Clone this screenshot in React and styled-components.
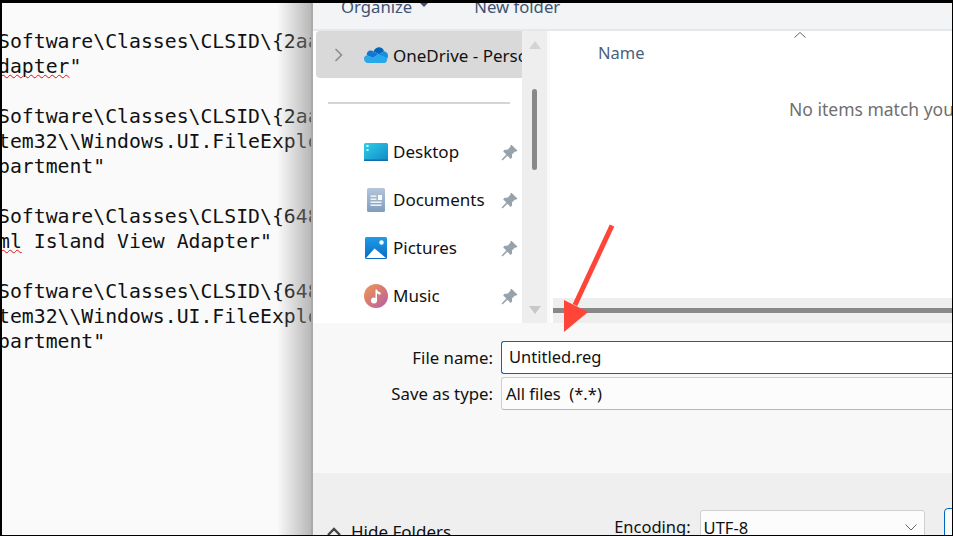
import React from "react";
import styled, { createGlobalStyle } from "styled-components";

const uiFont = `"Noto Sans", "Open Sans", sans-serif`;

const GlobalStyle = createGlobalStyle`
	html, body {
		margin: 0;
		padding: 0;
		background: #000;
	}
	* {
		box-sizing: border-box;
	}
`;

function CloudIcon() {
	return (
		<CloudSvg width="24" height="16" viewBox="0 0 24 16">
			<path d="M9.6 4.4C10.6 1.6 13 .3 15 .3c2.400 0 4.300 1.400 5 3.900l-5 3-5.400-2.800z" fill="#0364b8" />
			<path d="M9.600 4.400C8.200 3.400 6.800 3.200 5.600 3.600 3.500 4.300 2.600 6 2.800 8.200L9 11l5.600-3.800-5-2.800z" fill="#0f78d4" />
			<path d="M20 4.200c2.200.2 4 2 4 4.700 0 .9-.3 1.600-.6 2.200L17 12l-2.600-4.800L20 4.200z" fill="#1490df" />
			<path d="M2.800 8.200C1 8.500 0 10 0 11.700 0 14 1.800 16 4 16h16.500c1.300 0 2.400-.9 2.900-4.900L14.600 7.200 9 11 2.800 8.200z" fill="#28a8ea" />
		</CloudSvg>
	);
}

function DesktopIcon() {
	return (
		<svg width="24" height="18" viewBox="0 0 24 18">
			<defs>
				<linearGradient id="desk" x1="0" y1="0" x2="1" y2="1">
					<stop offset="0" stopColor="#2bd0e6" />
					<stop offset="1" stopColor="#1488c8" />
				</linearGradient>
			</defs>
			<rect width="24" height="18" rx="1.500" fill="url(#desk)" />
			<rect y="16.500" width="24" height="1.500" fill="#0f6db0" />
			<rect x="2.500" y="2" width="2" height="2" fill="#fff" />
			<rect x="2.500" y="6" width="2" height="2" fill="#d8f4fa" />
		</svg>
	);
}

function DocumentsIcon() {
	return (
		<svg width="18" height="24" viewBox="0 0 18 24">
			<defs>
				<linearGradient id="docs" x1="0" y1="0" x2="0" y2="1">
					<stop offset="0" stopColor="#b4c6da" />
					<stop offset="1" stopColor="#7f9dbd" />
				</linearGradient>
			</defs>
			<rect width="18" height="24" rx="1.500" fill="url(#docs)" />
			<rect x="3.500" y="7.500" width="6" height="1.300" fill="#fff" />
			<rect x="3.500" y="10.500" width="6" height="1.300" fill="#fff" />
			<rect x="3.500" y="13.500" width="11" height="1.300" fill="#fff" />
			<rect x="3.500" y="16.500" width="11" height="1.300" fill="#fff" />
			<rect x="11" y="7" width="4" height="5" fill="#fff" />
		</svg>
	);
}

function PicturesIcon() {
	return (
		<svg width="22" height="22" viewBox="0 0 22 22">
			<defs>
				<linearGradient id="pics" x1="0" y1="0" x2="0" y2="1">
					<stop offset="0" stopColor="#1f9be8" />
					<stop offset="1" stopColor="#0a6cc4" />
				</linearGradient>
			</defs>
			<rect width="22" height="22" rx="1.500" fill="url(#pics)" />
			<circle cx="16.500" cy="5.500" r="2.200" fill="#fff" />
			<path d="M1 21L9.500 11.500 21 21z" fill="#fff" />
		</svg>
	);
}

function MusicIcon() {
	return (
		<svg width="24" height="24" viewBox="0 0 24 24">
			<defs>
				<linearGradient id="music" x1="0" y1="0" x2="1" y2="1">
					<stop offset="0" stopColor="#f09a4c" />
					<stop offset="1" stopColor="#b85aa8" />
				</linearGradient>
			</defs>
			<circle cx="12" cy="12" r="12" fill="url(#music)" />
			<circle cx="10" cy="16.500" r="3" fill="#fff" />
			<path d="M11.500 16.500V5.500h1.500c.4 2 2 2.500 3.500 3v2.200c-1.500-.2-2.700-.7-3.500-1.500v7.300z" fill="#fff" />
		</svg>
	);
}

function PinIcon() {
	return (
		<svg width="17" height="17" viewBox="0 0 16 16">
			<path d="M9.800.6l5.600 5.600-1.300 1.200-1-.3-2.800 2.800.2 2.700-1.500 1.400-3-3L1.500 15.500 0.500 14.500 5 9.800 2 6.800l1.400-1.500 2.700.2 2.800-2.800-.3-1 1.200-1.100z" fill="#98a2aa" />
		</svg>
	);
}

const navItems = [
	{ label: "Desktop", icon: <DesktopIcon /> },
	{ label: "Documents", icon: <DocumentsIcon /> },
	{ label: "Pictures", icon: <PicturesIcon /> },
	{ label: "Music", icon: <MusicIcon /> },
];

function App() {
	return (
		<>
			<GlobalStyle />
			<Screen>
				<Editor>
					<Line>Software\Classes\CLSID\{"{"}2aa</Line>
					<Line><Misspelt>dapter</Misspelt>"</Line>
					<Line />
					<Line>Software\Classes\CLSID\{"{"}2aa</Line>
					<Line>tem32\\Windows.UI.FileExplo</Line>
					<Line>partment"</Line>
					<Line />
					<Line>Software\Classes\CLSID\{"{"}648</Line>
					<Line><Misspelt>ml</Misspelt> Island View Adapter"</Line>
					<Line />
					<Line>Software\Classes\CLSID\{"{"}648</Line>
					<Line>tem32\\Windows.UI.FileExplo</Line>
					<Line>partment"</Line>
				</Editor>
				<Dialog>
					<Toolbar>
						<ToolbarButton>
							Organize<ToolbarCaret />
						</ToolbarButton>
						<ToolbarButton>New folder</ToolbarButton>
					</Toolbar>
					<Browser>
						<NavPane>
							<SelectedRow>
								<Chevron viewBox="0 0 10 14" width="10" height="14">
									<path d="M1.500 1l6 6-6 6" fill="none" stroke="#8a8a8a" strokeWidth="1.500" />
								</Chevron>
								<CloudIcon />
								<NavLabel $selected>OneDrive - Personal</NavLabel>
							</SelectedRow>
							<NavDivider />
							{navItems.map((item) => (
								<NavRow key={item.label}>
									<NavIcon>{item.icon}</NavIcon>
									<NavLabel>{item.label}</NavLabel>
									<NavPin>
										<PinIcon />
									</NavPin>
								</NavRow>
							))}
						</NavPane>
						<NavScrollbar>
							<ScrollArrow viewBox="0 0 12 8" width="12" height="8">
								<path d="M6 0l6 8H0z" fill="#d4d4d4" />
							</ScrollArrow>
							<ScrollThumb />
							<ScrollArrow viewBox="0 0 12 8" width="12" height="8">
								<path d="M0 0h12L6 8z" fill="#c8c8c8" />
							</ScrollArrow>
						</NavScrollbar>
						<Gutter />
						<Files>
							<SortCaret viewBox="0 0 12 6" width="12" height="6">
								<path d="M.5 5.500L6 .5l5.500 5" fill="none" stroke="#666" />
							</SortCaret>
							<ColumnName>Name</ColumnName>
							<EmptyNote>No items match your search.</EmptyNote>
							<HScrollbar>
								<HThumb />
							</HScrollbar>
						</Files>
					</Browser>
					<Form>
						<FormRow>
							<FormLabel>File name:</FormLabel>
							<NameInput>Untitled.reg</NameInput>
						</FormRow>
						<FormRow>
							<FormLabel>Save as type:</FormLabel>
							<TypeSelect>All files&nbsp;&nbsp;(*.*)</TypeSelect>
						</FormRow>
					</Form>
					<Footer>
						<HideFolders>
							<svg viewBox="0 0 14 9" width="14" height="9">
								<path d="M1 8l6-6 6 6" fill="none" stroke="#444" strokeWidth="2.400" />
							</svg>
							Hide Folders
						</HideFolders>
						<EncodingLabel>Encoding:</EncodingLabel>
						<EncodingSelect>
							UTF-8
							<svg viewBox="0 0 12 7" width="12" height="7">
								<path d="M.5.5L6 6l5.500-5.500" fill="none" stroke="#666" />
							</svg>
						</EncodingSelect>
						<SaveButton />
					</Footer>
				</Dialog>
				<Arrow viewBox="0 0 953 536" width="953" height="536">
					<path d="M612 225.500L575 305" stroke="#ff4438" strokeWidth="5" fill="none" />
					<path d="M564 300L588 312 564 332z" fill="#ff4438" />
				</Arrow>
			</Screen>
		</>
	);
}

const CloudSvg = styled.svg`
	flex-shrink: 0;
`;
const Screen = styled.div`
	position: relative;
	width: 953px;
	height: 536px;
	overflow: hidden;
	display: flex;
	padding: 3px 1px 1px 2px;
	background: #000;
`;
const Editor = styled.div`
	position: relative;
	width: 309px;
	flex-shrink: 0;
	overflow: hidden;
	padding-top: 26px;
	background: #fafafa;
	font-family: "DejaVu Sans Mono", monospace;
	font-size: 19.8px;
	line-height: 25px;
	color: #111;
	&::after {
		content: "";
		position: absolute;
		top: 0;
		right: 0;
		bottom: 0;
		width: 34px;
		background: linear-gradient(to right, rgba(140, 140, 140, 0), rgba(140, 140, 140, 0.6));
	}
`;
const Line = styled.div`
	height: 25px;
	margin-left: -4px;
	white-space: pre;
`;
const Misspelt = styled.span`
	text-decoration: underline wavy #e01010 1px;
`;
const Dialog = styled.div`
	flex: 1;
	min-width: 0;
	display: flex;
	flex-direction: column;
	border-left: 2px solid #aaa;
	overflow: hidden;
	background: #f8f8f8;
	font-family: ${uiFont};
	font-size: 16.500px;
	color: #111;
`;
const Toolbar = styled.div`
	height: 28px;
	flex-shrink: 0;
	display: flex;
	gap: 46px;
	padding-left: 28px;
	background: #f3f4f6;
	border-bottom: 2px solid #e5e7ea;
	overflow: hidden;
`;
const ToolbarButton = styled.div`
	margin-top: -10px;
	display: flex;
	align-items: center;
	gap: 8px;
	height: 26px;
	color: #3e5374;
	font-size: 16.700px;
`;
const ToolbarCaret = styled.span`
	width: 0;
	height: 0;
	border-left: 4px solid transparent;
	border-right: 4px solid transparent;
	border-top: 4px solid #3e5374;
	margin-bottom: 3px;
`;
const Browser = styled.div`
	height: 292px;
	flex-shrink: 0;
	display: flex;
	background: #fff;
`;
const NavPane = styled.div`
	width: 209px;
	flex-shrink: 0;
	overflow: hidden;
	background: #fff;
	font-size: 17px;
`;
const SelectedRow = styled.div`
	height: 47px;
	margin-left: 3px;
	display: flex;
	align-items: center;
	background: #d9d9d9;
	border-radius: 4px 0 0 4px;
	white-space: nowrap;
	overflow: hidden;
	padding-left: 18px;
`;
const Chevron = styled.svg`
	margin-right: 20px;
	flex-shrink: 0;
`;
const NavDivider = styled.div`
	height: 2px;
	margin: 24px 12px 24px 15px;
	background: #d5d5d5;
`;
const NavRow = styled.div`
	height: 48px;
	display: flex;
	align-items: center;
	position: relative;
`;
const NavIcon = styled.div`
	width: 24px;
	margin-left: 51px;
	display: flex;
	justify-content: center;
`;
const NavLabel = styled.span`
	margin-left: 5px;
	color: #111;
	padding: ${(p) => (p.$selected ? "2px 0 0" : "0 0 2px")};
`;
const NavPin = styled.div`
	margin-left: auto;
	margin-right: 4px;
	display: flex;
`;
const NavScrollbar = styled.div`
	width: 25px;
	flex-shrink: 0;
	display: flex;
	flex-direction: column;
	align-items: center;
	padding: 10px 0 9px;
	background: #eeeeee;
`;
const ScrollArrow = styled.svg`
	flex-shrink: 0;
`;
const ScrollThumb = styled.div`
	width: 5px;
	height: 81px;
	margin: 40px 0 auto;
	background: #888;
	border-radius: 3px;
`;
const Gutter = styled.div`
	width: 3px;
	flex-shrink: 0;
	background: #fafafa;
`;
const Files = styled.div`
	flex: 1;
	min-width: 0;
	position: relative;
	display: flex;
	flex-direction: column;
	overflow: hidden;
	background: #fff;
`;
const SortCaret = styled.svg`
	margin: 1px 0 0 244px;
	flex-shrink: 0;
`;
const ColumnName = styled.div`
	margin: 3px 0 0 48px;
	height: 24px;
	line-height: 24px;
	color: #4c5f7d;
	font-size: 16.500px;
`;
const EmptyNote = styled.div`
	margin: 32px 0 0 239px;
	white-space: nowrap;
	color: #6f6f6f;
	font-size: 17.500px;
	line-height: 24px;
`;
const HScrollbar = styled.div`
	margin: auto 0 0 3px;
	height: 25px;
	padding-top: 10px;
	background: #eeeeee;
`;
const HThumb = styled.div`
	height: 5px;
	background: #888;
`;
const Form = styled.div`
	height: 150px;
	flex-shrink: 0;
	padding-top: 18px;
	display: flex;
	flex-direction: column;
	gap: 4px;
	background: #f8f8f8;
`;
const FormRow = styled.div`
	display: flex;
	align-items: center;
	gap: 8px;
	height: 32px;
`;
const FormLabel = styled.div`
	width: 180px;
	text-align: right;
	font-size: 16.800px;
`;
const NameInput = styled.div`
	flex: 1;
	height: 33px;
	padding-left: 7px;
	line-height: 30px;
	background: #fff;
	border: 1px solid #0067c0;
	border-right: none;
	border-radius: 3px 0 0 3px;
`;
const TypeSelect = styled.div`
	flex: 1;
	height: 33px;
	padding-left: 4px;
	line-height: 31px;
	background: #fcfcfc;
	border: 1px solid #cfcfcf;
	border-bottom-color: #b8b8b8;
	border-right: none;
	border-radius: 3px 0 0 3px;
`;
const Footer = styled.div`
	flex: 1;
	min-height: 0;
	display: flex;
	align-items: flex-start;
	padding-left: 14px;
	background: #efefef;
`;
const HideFolders = styled.div`
	display: flex;
	align-items: center;
	gap: 10px;
	margin-top: 46px;
	white-space: nowrap;
	font-size: 17px;
	height: 24px;
	flex-shrink: 0;
`;
const EncodingLabel = styled.div`
	margin: 42px 0 0 163px;
	white-space: nowrap;
	line-height: 24px;
	flex-shrink: 0;
`;
const EncodingSelect = styled.div`
	width: 225px;
	height: 34px;
	flex-shrink: 0;
	margin: 37px 0 0 9px;
	padding: 0 7px 0 3px;
	display: flex;
	align-items: center;
	justify-content: space-between;
	background: #fcfcfc;
	border: 1px solid #d0d0d0;
	border-radius: 3px;
`;
const SaveButton = styled.div`
	width: 40px;
	height: 40px;
	flex-shrink: 0;
	margin: 35px 0 0 19px;
	background: #fcfcfc;
	border: 1px solid #0067c0;
	border-radius: 4px;
`;
const Arrow = styled.svg`
	position: absolute;
	top: 0;
	left: 0;
	pointer-events: none;
`;

export default App;
